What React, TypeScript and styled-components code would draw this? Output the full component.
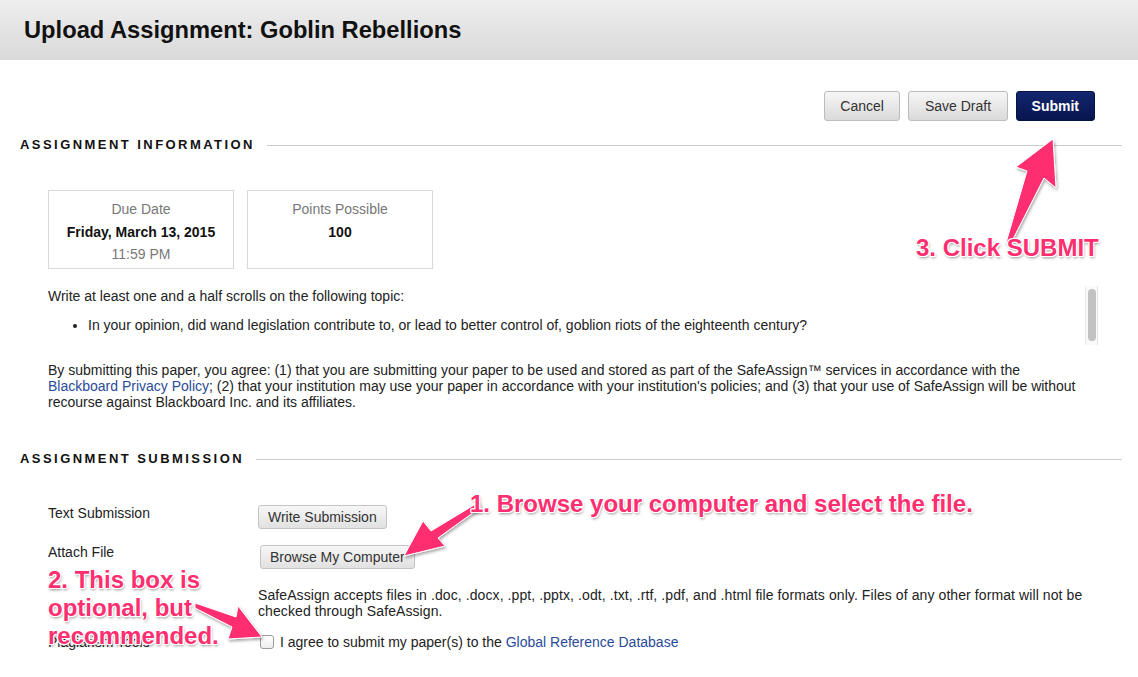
import styled, { createGlobalStyle } from "styled-components";

const GlobalStyle = createGlobalStyle`
  html, body {
    margin: 0;
    padding: 0;
    background: #ffffff;
  }
  body {
    font-family: "Liberation Sans", Arial, Helvetica, sans-serif;
    color: #222222;
    font-size: 14px;
  }
`;

const pink = "#ff2e70";

const Page = styled.div`
  position: relative;
  width: 1138px;
  height: 677px;
  overflow: hidden;
`;

const Header = styled.header`
  height: 60px;
  display: flex;
  align-items: center;
  padding-left: 24px;
  background: linear-gradient(#eeeeee, #d9d9d9);
`;

const Title = styled.h1`
  margin: 0;
  font-size: 23.7px;
  font-weight: 700;
  color: #111111;
  padding-top: 1px;
`;

const Main = styled.main`
  padding: 0 16px 0 20px;
`;

const ButtonBar = styled.div`
  display: flex;
  justify-content: flex-end;
  gap: 8px;
  padding: 31px 27px 0 0;
`;

const ActionButton = styled.button<{ $primary?: boolean }>`
  height: 30px;
  padding: 0 ${(p) => (p.$primary ? "15px" : "15.5px")};
  border-radius: 3px;
  font-family: inherit;
  font-size: 14px;
  font-weight: ${(p) => (p.$primary ? 700 : 400)};
  color: ${(p) => (p.$primary ? "#ffffff" : "#333333")};
  border: 1px solid ${(p) => (p.$primary ? "#061345" : "#bcbcbc")};
  background: ${(p) =>
    p.$primary
      ? "linear-gradient(#13266e, #07144f)"
      : "linear-gradient(#f6f6f6, #dadada)"};
`;

const SectionHead = styled.div<{ $top: number }>`
  display: flex;
  align-items: center;
  gap: 12px;
  margin-top: ${(p) => p.$top}px;
`;

const SectionTitle = styled.h2`
  margin: 0;
  font-size: 13px;
  font-weight: 700;
  letter-spacing: 2.45px;
  color: #111111;
  white-space: nowrap;
`;

const Rule = styled.div`
  flex: 1;
  height: 1px;
  background: #cccccc;
  margin-top: 2px;
`;

const InfoBoxes = styled.div`
  display: flex;
  gap: 13px;
  margin: 38px 0 0 28px;
`;

const InfoBox = styled.div`
  width: 186px;
  height: 79px;
  box-sizing: border-box;
  border: 1px solid #d9d9d9;
  padding-top: 7px;
  text-align: center;
  line-height: 22.5px;
`;

const InfoLabel = styled.div`
  color: #777777;
`;

const InfoValue = styled.div`
  font-weight: 700;
  color: #111111;
`;

const Instructions = styled.div`
  display: flex;
  margin: 15px 0 0 28px;
  width: 1050px;
  height: 62px;
`;

const InstructionText = styled.div`
  flex: 1;
  line-height: 20px;
  padding-top: 2px;

  & p {
    margin: 0;
  }
  & ul {
    margin: 9px 0 0;
    padding-left: 40px;
  }
`;

const ScrollTrack = styled.div`
  width: 13px;
  margin-top: 2px;
  height: 59px;
  box-sizing: border-box;
  border-left: 1px solid #ececec;
  border-right: 1px solid #e4e4e4;
  background: #fafafa;
  display: flex;
  justify-content: center;
  padding-top: 3px;
`;

const ScrollThumb = styled.div`
  width: 8px;
  height: 52px;
  border-radius: 4px;
  background: #c2c2c2;
`;

const Agreement = styled.p`
  margin: 16px 0 0 28px;
  width: 1060px;
  line-height: 16px;
`;

const Link = styled.a`
  color: #2a4b9b;
  text-decoration: none;
`;

const Form = styled.div`
  display: grid;
  grid-template-columns: 210px 1fr;
  margin: 36px 0 0 28px;
  align-items: start;
`;

const Label = styled.div<{ $top: number }>`
  margin-top: ${(p) => p.$top}px;
  line-height: 18px;
  color: #222222;
`;

const Field = styled.div<{ $top: number; $indent?: number }>`
  margin-top: ${(p) => p.$top}px;
  margin-left: ${(p) => p.$indent ?? 0}px;
`;

const SmallButton = styled.button`
  height: 24px;
  padding: 0 9px;
  border-radius: 3px;
  border: 1px solid #c4c4c4;
  background: linear-gradient(#f7f7f7, #e1e1e1);
  font-family: inherit;
  font-size: 14px;
  color: #333333;
`;

const Note = styled.div`
  width: 840px;
  line-height: 16px;
  letter-spacing: 0.09px;
`;

const CheckRow = styled.label`
  display: flex;
  align-items: center;
  gap: 6px;
  margin-left: 2px;
  line-height: 18px;
`;

const Box = styled.span`
  width: 12px;
  height: 12px;
  border: 1px solid #9a9a9a;
  border-radius: 3px;
  background: linear-gradient(#ffffff, #ededed);
`;

const Callout = styled.div<{ $x: number; $y: number }>`
  position: absolute;
  left: ${(p) => p.$x}px;
  top: ${(p) => p.$y}px;
  font-size: 24px;
  font-weight: 700;
  line-height: 28px;
  color: ${pink};
  white-space: nowrap;
  text-shadow: 1px 0 0 #fff, -1px 0 0 #fff, 0 1px 0 #fff, 0 -1px 0 #fff,
    1px 1px 0 #fff, -1px -1px 0 #fff, 1px -1px 0 #fff, -1px 1px 0 #fff,
    1px 2px 3px rgba(0, 0, 0, 0.45);
`;

const ArrowLayer = styled.svg`
  position: absolute;
  left: 0;
  top: 0;
  pointer-events: none;
`;

export default function App() {
  return (
    <Page>
      <GlobalStyle />
      <Header>
        <Title>Upload Assignment: Goblin Rebellions</Title>
      </Header>
      <Main>
        <ButtonBar>
          <ActionButton>Cancel</ActionButton>
          <ActionButton>Save Draft</ActionButton>
          <ActionButton $primary>Submit</ActionButton>
        </ButtonBar>

        <SectionHead $top={16}>
          <SectionTitle>ASSIGNMENT INFORMATION</SectionTitle>
          <Rule />
        </SectionHead>

        <InfoBoxes>
          <InfoBox>
            <InfoLabel>Due Date</InfoLabel>
            <InfoValue>Friday, March 13, 2015</InfoValue>
            <InfoLabel>11:59 PM</InfoLabel>
          </InfoBox>
          <InfoBox>
            <InfoLabel>Points Possible</InfoLabel>
            <InfoValue>100</InfoValue>
          </InfoBox>
        </InfoBoxes>

        <Instructions>
          <InstructionText>
            <p>Write at least one and a half scrolls on the following topic:</p>
            <ul>
              <li>
                In your opinion, did wand legislation contribute to, or lead to
                better control of, goblion riots of the eighteenth century?
              </li>
            </ul>
          </InstructionText>
          <ScrollTrack>
            <ScrollThumb />
          </ScrollTrack>
        </Instructions>

        <Agreement>
          By submitting this paper, you agree: (1) that you are submitting your
          paper to be used and stored as part of the SafeAssign™ services in
          accordance with the
          <br />
          <Link href="#">Blackboard Privacy Policy</Link>; (2) that your
          institution may use your paper in accordance with your institution's
          policies; and (3) that your use of SafeAssign will be without
          <br />
          recourse against Blackboard Inc. and its affiliates.
        </Agreement>

        <SectionHead $top={41}>
          <SectionTitle>ASSIGNMENT SUBMISSION</SectionTitle>
          <Rule />
        </SectionHead>

        <Form>
          <Label $top={2}>Text Submission</Label>
          <Field $top={3}>
            <SmallButton>Write Submission</SmallButton>
          </Field>

          <Label $top={14}>Attach File</Label>
          <Field $top={16} $indent={2}>
            <SmallButton>Browse My Computer</SmallButton>
          </Field>

          <div />
          <Field $top={18}>
            <Note>
              SafeAssign accepts files in .doc, .docx, .ppt, .pptx, .odt, .txt,
              .rtf, .pdf, and .html file formats only. Files of any other format
              will not be checked through SafeAssign.
            </Note>
          </Field>

          <Label $top={14}>Plagiarism Tools</Label>
          <Field $top={14}>
            <CheckRow>
              <Box />
              <span>
                I agree to submit my paper(s) to the{" "}
                <Link href="#">Global Reference Database</Link>
              </span>
            </CheckRow>
          </Field>
        </Form>
      </Main>

      <ArrowLayer width="1138" height="677" viewBox="0 0 1138 677">
        <defs>
          <filter id="arrowShadow" x="-20%" y="-20%" width="140%" height="140%">
            <feDropShadow dx="1" dy="2" stdDeviation="1.5" floodColor="#000" floodOpacity="0.35" />
          </filter>
        </defs>
        <g fill={pink} stroke="#ffffff" strokeWidth="1" strokeLinejoin="round" filter="url(#arrowShadow)">
          <polygon points="1006,243 1027,171 1016,167 1053,139 1056,188 1044,178 1011,243" />
          <polygon points="479,502 431,531 423,521 404,556 445,546 438,538 481,507" />
          <polygon points="195,603 236,617 238,606 262,637 228,639 232,627 195,608" />
        </g>
      </ArrowLayer>

      <Callout $x={916} $y={234}>3. Click SUBMIT</Callout>
      <Callout $x={470} $y={490}>1. Browse your computer and select the file.</Callout>
      <Callout $x={48} $y={566}>
        2. This box is
        <br />
        optional, but
        <br />
        recommended.
      </Callout>
    </Page>
  );
}
